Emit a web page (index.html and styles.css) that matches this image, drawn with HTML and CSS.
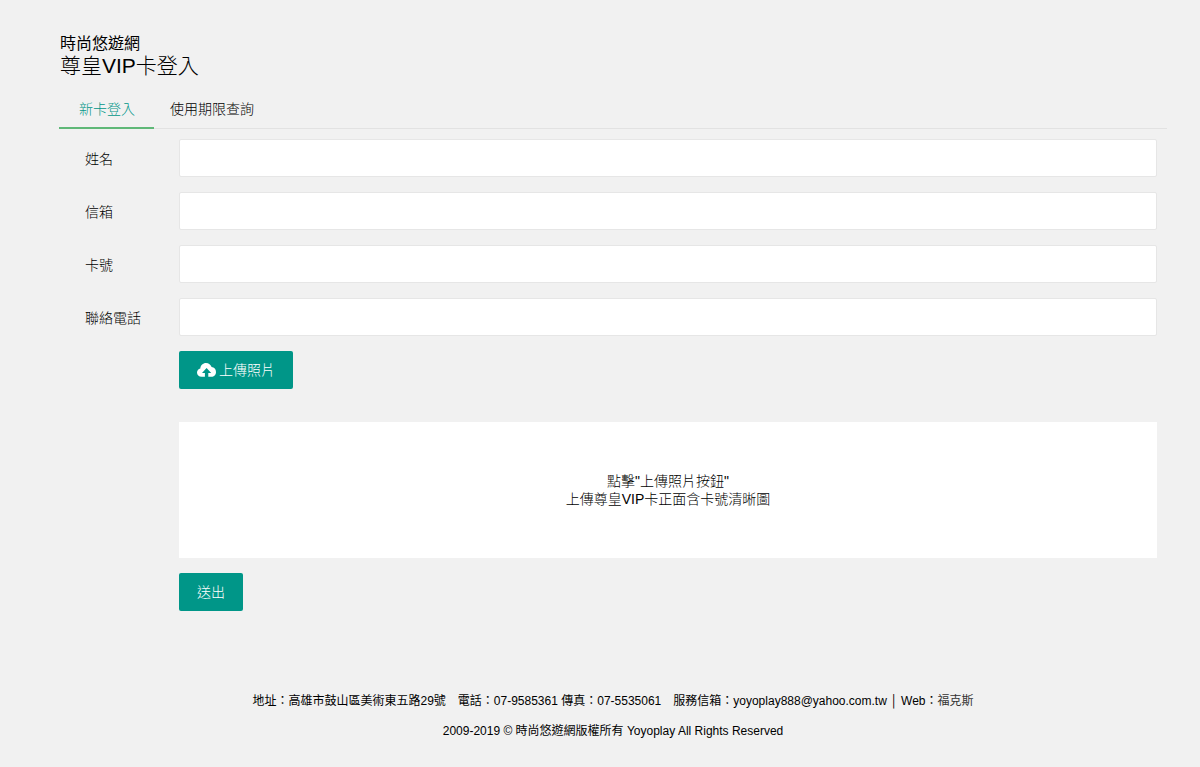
FILE: index.html
```html
<!DOCTYPE html>
<html lang="zh-Hant">
<head>
<meta charset="utf-8">
<meta name="viewport" content="width=device-width, initial-scale=1">
<title>尊皇VIP卡登入</title>
<link rel="stylesheet" href="styles.css">
</head>
<body>
<div class="page">
  <header class="header">
    <p class="site">時尚悠遊網</p>
    <h1 class="title">尊皇VIP卡登入</h1>
  </header>
  <nav class="tabs">
    <a class="tab tab-active" href="#new">新卡登入</a>
    <a class="tab" href="#query">使用期限查詢</a>
  </nav>
  <main>
    <form class="form" id="new">
      <div class="row">
        <label class="label" for="name">姓名</label>
        <input class="input" id="name" type="text">
      </div>
      <div class="row">
        <label class="label" for="email">信箱</label>
        <input class="input" id="email" type="text">
      </div>
      <div class="row">
        <label class="label" for="card">卡號</label>
        <input class="input" id="card" type="text">
      </div>
      <div class="row">
        <label class="label" for="phone">聯絡電話</label>
        <input class="input" id="phone" type="text">
      </div>
      <div class="field">
        <button class="button" type="button">
          <svg class="icon" viewBox="0 0 19 14" aria-hidden="true">
            <path fill="#fff" d="M4.6 13.8C1.9 13.8 0 12 0 9.6C0 7.5 1.3 5.9 3.3 5.4C3.6 2.3 6 0 9 0C11.8 0 13.8 1.7 14.6 4.1C17.2 4.4 19 6.3 19 8.9C19 11.7 17 13.8 14.4 13.8H11.3V10H14.2L9.6 5L5 10H7.9V13.8Z"/>
          </svg>
          <span>上傳照片</span>
        </button>
        <div class="preview">
          <p>點擊"上傳照片按鈕"</p>
          <p>上傳尊皇VIP卡正面含卡號清晰圖</p>
        </div>
        <button class="button" type="submit">送出</button>
      </div>
    </form>
  </main>
  <footer class="footer">
    <p>地址：高雄市鼓山區美術東五路29號　電話：07-9585361 傳真：07-5535061　服務信箱：yoyoplay888@yahoo.com.tw │ Web：<a class="credit" href="#web">福克斯</a></p>
    <p>2009-2019 © 時尚悠遊網版權所有 Yoyoplay All Rights Reserved</p>
  </footer>
</div>
</body>
</html>
```
FILE: styles.css
```css
* {
  box-sizing: border-box;
}

body {
  margin: 0;
  background: #f1f1f1;
  color: #000;
  font: 300 14px/18px "Liberation Sans", "Noto Sans CJK TC", sans-serif;
}

p,
h1 {
  margin: 0;
}

.page {
  padding: 33px 33px 0 59px;
}

.header {
  padding-left: 1px;
}

.site {
  font-size: 16px;
  font-weight: 400;
  line-height: 22px;
}

.title {
  font-size: 21px;
  font-weight: 300;
  line-height: 22px;
}

.tabs {
  display: flex;
  height: 40px;
  margin: 12px 0 10px;
  border-bottom: 1px solid #e2e2e2;
}

.tab {
  height: 40px;
  padding: 0 16px;
  color: #000;
  line-height: 40px;
  text-decoration: none;
}

.tab-active {
  padding: 0 19px 0 20px;
  border-bottom: 2px solid #5fb878;
  color: #009688;
}

.form {
  padding-right: 10px;
}

.row {
  display: flex;
  align-items: center;
  margin-bottom: 15px;
}

.label {
  flex: 0 0 120px;
  padding: 2px 0 0 26px;
}

.input {
  flex: 1;
  min-width: 0;
  height: 38px;
  padding: 0 10px;
  border: 1px solid #e6e6e6;
  border-radius: 2px;
  background: #fff;
  font: inherit;
}

.field {
  padding-left: 120px;
}

.button {
  display: flex;
  align-items: center;
  gap: 3px;
  height: 38px;
  padding: 0 18px;
  border: 0;
  border-radius: 2px;
  background: #009688;
  color: #fff;
  font: inherit;
  cursor: pointer;
}

.icon {
  width: 19px;
  height: 14px;
}

.preview {
  margin: 33px 0 15px;
  padding: 50px 16px;
  background: #fff;
  text-align: center;
}

.footer {
  padding: 75px 0 16px;
  font-size: 12px;
  font-weight: 400;
  line-height: 30px;
  text-align: center;
}

.credit {
  color: #333;
  text-decoration: none;
}
```
